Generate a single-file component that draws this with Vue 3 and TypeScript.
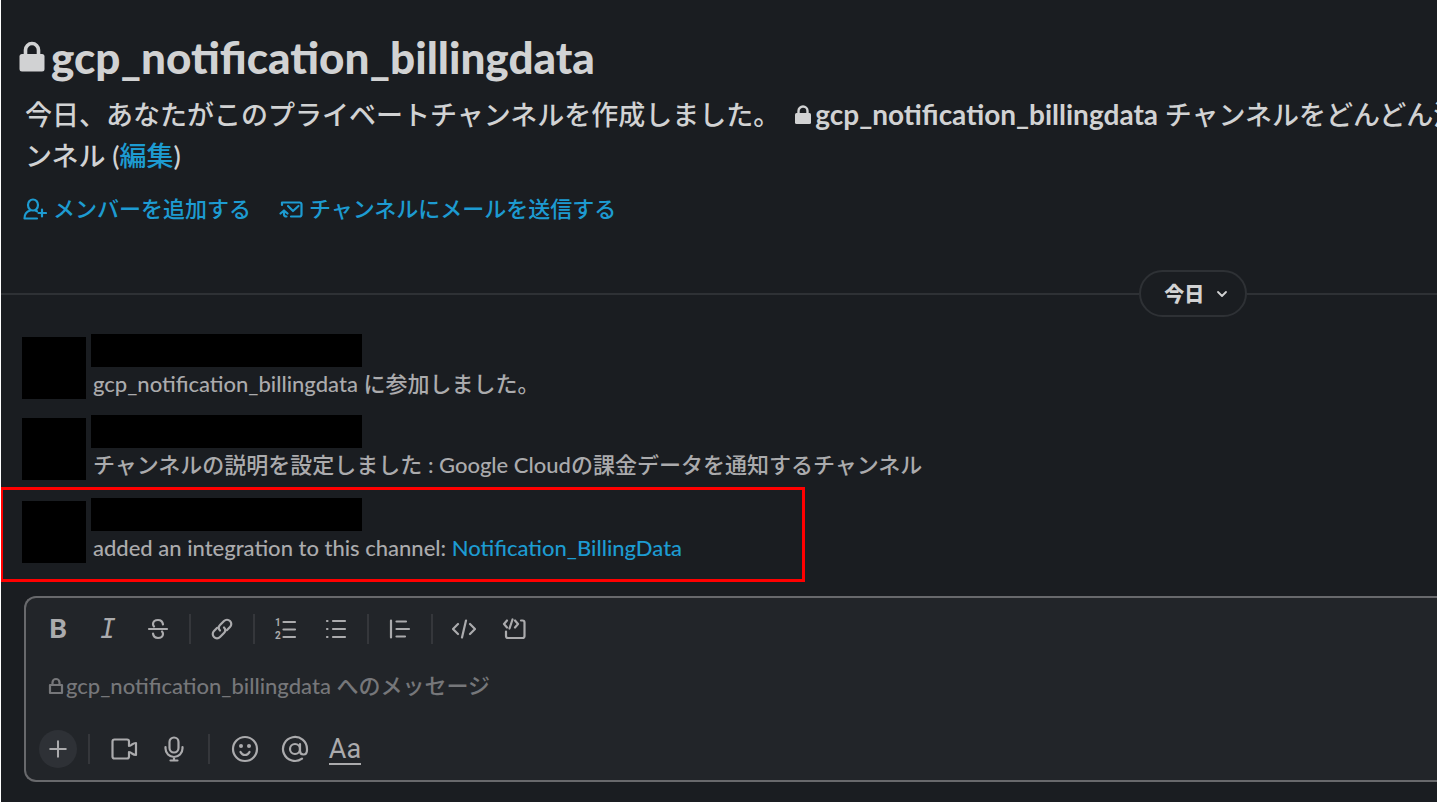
<script setup lang="ts">
import { ref } from 'vue'

interface Message {
  id: number
  text: string
  link?: string
  highlighted?: boolean
}

const channel = 'gcp_notification_billingdata'
const draft = ref('')

const messages: Message[] = [
  { id: 1, text: `${channel} に参加しました。` },
  { id: 2, text: 'チャンネルの説明を設定しました : Google Cloudの課金データを通知するチャンネル' },
  { id: 3, text: 'added an integration to this channel: ', link: 'Notification_BillingData', highlighted: true },
]
</script>

<template>
  <main class="page">
    <header class="intro">
      <h1 class="title">
        <svg class="title-lock" viewBox="0 0 26 32" aria-hidden="true">
          <path d="M6.500 14V9a6.500 6.500 0 0 1 13 0V14" fill="none" stroke="currentColor" stroke-width="3.600" />
          <rect x="0.500" y="13" width="25" height="17.500" rx="2.500" fill="currentColor" />
        </svg>
        <span>{{ channel }}</span>
      </h1>
      <p class="description">
        今日、あなたがこのプライベートチャンネルを作成しました。<svg class="inline-lock" viewBox="0 0 18 20" aria-hidden="true">
          <path d="M4.500 9V6a4.500 4.500 0 0 1 9 0v3" fill="none" stroke="currentColor" stroke-width="2.400" />
          <rect x="1" y="8" width="16" height="11" rx="1.500" fill="currentColor" />
        </svg><strong>{{ channel }}</strong> チャンネルをどんどん活<br />ンネル (<a href="#edit">編集</a>)
      </p>
      <nav class="actions" aria-label="チャンネル">
        <a href="#members">
          <svg viewBox="0 0 24 24" class="action-icon" aria-hidden="true">
            <g fill="none" stroke="currentColor" stroke-width="2.200" stroke-linecap="round" stroke-linejoin="round">
              <ellipse cx="10" cy="8" rx="5" ry="5.500" />
              <path d="M7 13.500C3.500 14.500 1.500 17 1.500 21.500h12.500M12.500 13.500l1.500 .8M19 12.500v7M15.500 16h7.500" />
            </g>
          </svg>
          <span>メンバーを追加する</span>
        </a>
        <a href="#mail">
          <svg viewBox="0 0 24 24" class="action-icon" aria-hidden="true">
            <g fill="none" stroke="currentColor" stroke-width="2.200" stroke-linecap="round" stroke-linejoin="round">
              <path d="M3 8V5.500h17.500q2 0 2 2v10q0 2-2 2H12" />
              <path d="M9 9l5 5 5.500-5" />
              <path d="M1.500 16.500l3.500-3 3.500 3M5 14v3.500q0 2 2.500 2" />
            </g>
          </svg>
          <span>チャンネルにメールを送信する</span>
        </a>
      </nav>
    </header>

    <div class="divider">
      <button type="button" class="date">
        今日
        <svg viewBox="0 0 12 8" class="chevron" aria-hidden="true">
          <path d="M2 2l4 4 4-4" fill="none" stroke="currentColor" stroke-width="1.800" stroke-linecap="round" stroke-linejoin="round" />
        </svg>
      </button>
    </div>

    <section class="messages">
      <article v-for="message in messages" :key="message.id" class="message" :class="{ highlighted: message.highlighted }">
        <div class="avatar"></div>
        <div class="body">
          <div class="name"></div>
          <p class="text">{{ message.text }}<a v-if="message.link" href="#integration">{{ message.link }}</a></p>
        </div>
      </article>
    </section>

    <form class="composer" @submit.prevent>
      <div class="toolbar">
        <button type="button" class="tool bold" aria-label="太字">B</button>
        <button type="button" class="tool italic" aria-label="斜体">I</button>
        <button type="button" class="tool" aria-label="取り消し線">
          <svg viewBox="0 0 24 24" aria-hidden="true">
            <g class="line">
              <path d="M3 12h18M17 7.500C16.500 4 14.500 3 12 3 9 3 7 4.700 7 7c0 1 .4 1.800 1 2.500M7 16.500C7.500 20 9.500 21 12 21c3 0 5-1.700 5-4 0-1-.4-1.800-1-2.500" />
            </g>
          </svg>
        </button>
        <span class="sep"></span>
        <button type="button" class="tool" aria-label="リンク">
          <svg viewBox="0 0 24 24" aria-hidden="true">
            <g class="line">
              <path d="M10 13.500c-1.700-1.800-1.500-4 0-5.500l4-4c1.700-1.700 4.300-1.700 6 0s1.700 4.300 0 6l-3.200 3.200" />
              <path d="M14 10.500c1.700 1.800 1.500 4 0 5.500l-4 4c-1.700 1.700-4.300 1.700-6 0s-1.700-4.300 0-6l3.200-3.200" />
            </g>
          </svg>
        </button>
        <span class="sep"></span>
        <button type="button" class="tool" aria-label="順序付きリスト">
          <svg viewBox="0 0 24 24" aria-hidden="true">
            <path class="line" d="M9.500 5H21M9.500 12.500H21M9.500 20H21" />
            <text x="1" y="9" class="numeral">1</text>
            <text x="1" y="22" class="numeral">2</text>
          </svg>
        </button>
        <button type="button" class="tool" aria-label="箇条書き">
          <svg viewBox="0 0 24 24" aria-hidden="true">
            <path class="line" d="M9 4h12M9 12h12M9 20h12M3 4h.5M3 12h.5M3 20h.5" />
          </svg>
        </button>
        <span class="sep"></span>
        <button type="button" class="tool" aria-label="引用">
          <svg viewBox="0 0 24 24" aria-hidden="true">
            <path class="line" d="M3 3.500v17M8.500 4.500H18M8.500 12H21M8.500 19.500H17" />
          </svg>
        </button>
        <span class="sep"></span>
        <button type="button" class="tool" aria-label="コード">
          <svg viewBox="0 0 24 24" aria-hidden="true">
            <path class="line" d="M6 7l-5 5 5 5M18 7l5 5-5 5M14 3.500l-4 17" />
          </svg>
        </button>
        <button type="button" class="tool" aria-label="コードブロック">
          <svg viewBox="0 0 24 24" aria-hidden="true">
            <path class="line" d="M5 3.500L2 7l3 3.500M13 3.500L16 7l-3 3.500M10.500 2.500l-3 9M19 3.500h1.500q2 0 2 2V19q0 2-2 2H6q-2 0-2-2v-4.500" />
          </svg>
        </button>
      </div>

      <label class="entry">
        <svg class="entry-lock" viewBox="0 0 16 18" aria-hidden="true">
          <path d="M4.500 8V5.500a3.500 3.500 0 0 1 7 0V8M2 8h12v8H2z" fill="none" stroke="currentColor" stroke-width="2.200" stroke-linejoin="round" />
        </svg>
        <input v-model="draft" type="text" :placeholder="`${channel} へのメッセージ`" aria-label="メッセージ" />
      </label>

      <div class="footer">
        <button type="button" class="tool plus" aria-label="添付">
          <svg viewBox="0 0 24 24" aria-hidden="true"><path class="line" d="M12 3.500v17M3.500 12h17" /></svg>
        </button>
        <span class="sep"></span>
        <button type="button" class="tool" aria-label="ビデオ">
          <svg class="large" viewBox="0 0 28 28" aria-hidden="true">
            <path class="line" d="M4.500 4.500h12.500q2 0 2 2V11q1.500 0 3-1.500 2-1.500 4-1.500v12q-2 0-4-1.500-1.500-1.500-3-1.500v4.500q0 2-2 2H4.500q-2 0-2-2v-15q0-2 2-2z" />
          </svg>
        </button>
        <button type="button" class="tool" aria-label="音声">
          <svg class="large" viewBox="0 0 28 28" aria-hidden="true">
            <g class="line">
              <rect x="9.500" y="2.500" width="9" height="15" rx="4.500" />
              <path d="M5.500 12v1.500a8.500 8.500 0 0 0 17 0V12M14 22v3.500M10.500 25.500h7" />
            </g>
          </svg>
        </button>
        <span class="sep wide"></span>
        <button type="button" class="tool" aria-label="絵文字">
          <svg class="large" viewBox="0 0 28 28" aria-hidden="true">
            <circle class="line" cx="14" cy="14" r="12" />
            <circle cx="10" cy="11" r="2" fill="currentColor" />
            <circle cx="18" cy="11" r="2" fill="currentColor" />
            <path class="line" d="M9.500 17q1.500 3 4.500 3t4.500-3" />
          </svg>
        </button>
        <button type="button" class="tool" aria-label="メンション">
          <svg class="large" viewBox="0 0 28 28" aria-hidden="true">
            <g class="line">
              <circle cx="14" cy="14" r="5" />
              <path d="M19 9v7q0 3.500 3.500 3.500T26 15v-1a12 12 0 1 0-5 9.700" />
            </g>
          </svg>
        </button>
        <button type="button" class="tool format" aria-label="書式設定"><span>Aa</span></button>
      </div>
    </form>
  </main>
</template>

<style>
body {
  margin: 0;
  background: #1a1d21;
}
</style>

<style scoped>
* {
  box-sizing: border-box;
}

.page {
  min-height: 100vh;
  padding: 30px 0 20px;
  overflow: hidden;
  border-left: 1px solid #fff;
  background: #1a1d21;
  color: #d1d2d3;
  font-family: Lato, 'Noto Sans CJK JP', sans-serif;
  font-size: 22px;
  font-weight: 500;
}

button,
input {
  border: 0;
  padding: 0;
  background: none;
  color: inherit;
  font: inherit;
}

a {
  color: #1d9bd1;
  text-decoration: none;
}

.title {
  display: flex;
  align-items: center;
  gap: 6px;
  margin: 0;
  padding-left: 18px;
  font-size: 44px;
  font-weight: 900;
  line-height: 54px;
}

.title-lock {
  width: 26px;
  height: 32px;
}

.description {
  margin: 10px 0 0;
  padding-left: 24px;
  font-size: 27px;
  line-height: 41px;
  white-space: nowrap;
}

.description strong {
  font-size: 28px;
  line-height: 40px;
}

.inline-lock {
  width: 18px;
  height: 20px;
  margin: 0 3px 0 14px;
}

.actions {
  display: flex;
  gap: 28px;
  margin-top: 17px;
  padding-left: 22px;
  line-height: 32px;
}

.actions a {
  display: flex;
  align-items: center;
  gap: 6px;
}

.action-icon {
  width: 24px;
  height: 24px;
}

.divider {
  display: flex;
  align-items: center;
  margin-top: 45px;
}

.divider::before,
.divider::after {
  content: '';
  height: 2px;
  background: #2e3135;
}

.divider::before {
  flex: 6;
}

.divider::after {
  flex: 1;
}

.date {
  display: flex;
  align-items: center;
  justify-content: center;
  gap: 12px;
  width: 108px;
  height: 47px;
  padding-left: 6px;
  border: 2px solid #2e3135;
  border-radius: 24px;
  font-size: 20px;
  font-weight: 900;
}

.chevron {
  width: 12px;
  height: 8px;
}

.messages {
  margin-top: 17px;
}

.message {
  display: flex;
  gap: 5px;
  padding-left: 21px;
}

.message + .message {
  margin-top: 15px;
}

.message + .message.highlighted {
  width: 805px;
  max-width: 100%;
  margin: 6px 0 0 -1px;
  padding: 8px 0 15px 19px;
  border: 3px solid #f00;
}

.avatar {
  width: 64px;
  height: 62px;
  margin-top: 3px;
  background: #000;
}

.name {
  width: 271px;
  height: 33px;
  background: #000;
}

.text {
  margin: 2px 0 1px;
  padding-left: 2px;
  color: #ababad;
  line-height: 30px;
  white-space: nowrap;
}

.composer {
  margin: 14px 0 0 23px;
  border: 2px solid #68696c;
  border-right: 0;
  border-radius: 12px 0 0 12px;
  background: #222529;
}

.toolbar,
.footer {
  display: flex;
  align-items: center;
  gap: 10px;
  padding-left: 12px;
  color: #ababad;
}

.toolbar {
  height: 62px;
}

.footer {
  height: 68px;
  padding-top: 6px;
}

.tool {
  display: flex;
  align-items: center;
  justify-content: center;
  width: 40px;
  height: 40px;
}

.tool svg {
  width: 24px;
  height: 24px;
}

.tool .large {
  width: 28px;
  height: 28px;
}

.line {
  fill: none;
  stroke: currentColor;
  stroke-width: 2.2;
  stroke-linecap: round;
  stroke-linejoin: round;
}

.numeral {
  fill: currentColor;
  font-family: Roboto, sans-serif;
  font-size: 10px;
  font-weight: 700;
}

.bold {
  font-size: 27px;
  font-weight: 900;
  line-height: 38px;
  padding-bottom: 2px;
}

.italic {
  font-family: 'DejaVu Sans Mono', monospace;
  font-size: 26px;
  font-style: italic;
}

.sep {
  width: 2px;
  height: 30px;
  margin: 0 1px;
  background: #35373b;
}

.footer .sep {
  margin: 0 4px 0 0;
}

.footer .sep.wide {
  margin: 0 5px 0 4px;
}

.plus {
  width: 38px;
  height: 38px;
  margin: 0 1px;
  border-radius: 50%;
  background: #2e3136;
}

.tool.plus svg {
  width: 22px;
  height: 22px;
}

.format {
  padding-top: 2px;
}

.format span {
  border-bottom: 2px solid currentColor;
  font-family: Roboto, sans-serif;
  font-size: 27px;
  font-weight: 400;
  line-height: 28px;
}

.entry {
  display: flex;
  align-items: center;
  gap: 2px;
  height: 52px;
  padding-left: 22px;
  color: #76777a;
}

.entry-lock {
  width: 16px;
  height: 18px;
}

.entry input {
  flex: 1;
  min-width: 0;
  height: 34px;
  padding-bottom: 2px;
  outline: 0;
}

.entry input::placeholder {
  color: #76777a;
  opacity: 1;
}
</style>
